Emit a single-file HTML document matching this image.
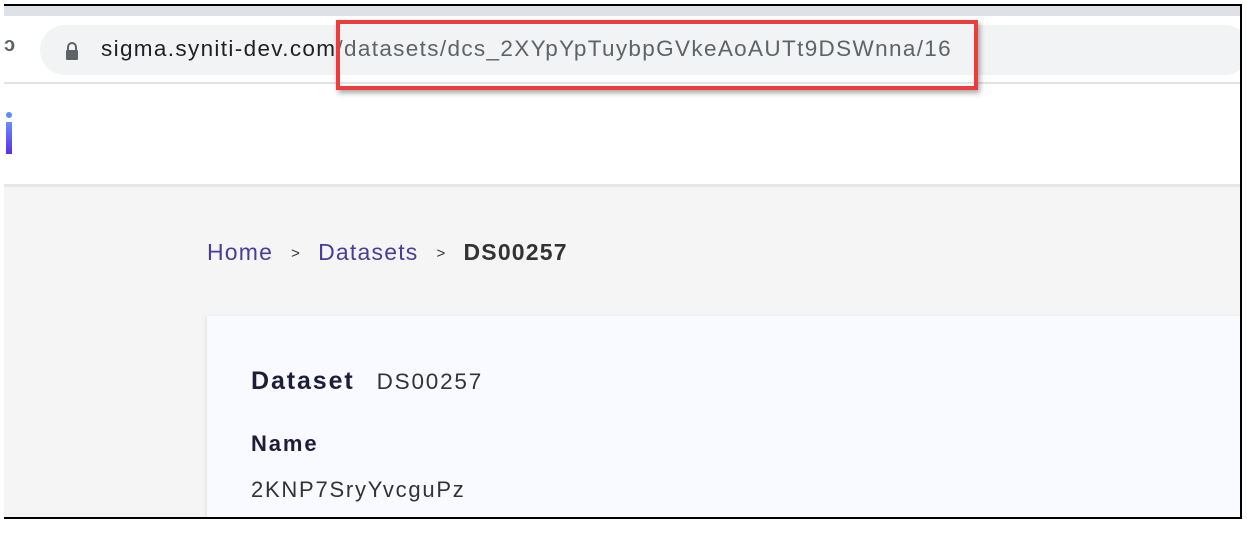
<!DOCTYPE html>
<html><head><style>
*{margin:0;padding:0;box-sizing:border-box}
body{width:1247px;height:533px;background:#fff;position:relative;overflow:hidden;font-family:"Liberation Sans",sans-serif}
.abs{position:absolute}
</style></head><body>
<div class="abs" style="left:4px;top:4px;width:1238px;height:515px;border:2px solid #000;border-left:none;overflow:hidden;background:#fff">
  <div class="abs" style="left:0;top:0;width:1236px;height:10px;background:#dee1e6"></div>
  <div class="abs" style="left:0;top:10px;width:1236px;height:66px;background:#fff"></div>
  <div class="abs" style="left:36px;top:19px;width:1210px;height:50px;border-radius:25px;background:#f1f3f4"></div>
  <div class="abs" style="left:0;top:76px;width:1236px;height:2px;background:#e3e3e3"></div>
  <div class="abs" style="left:0;top:28px;width:6px;height:28px;color:#5f6368;font-size:20px;font-weight:bold">ↄ</div>
  <svg class="abs" style="left:60px;top:35px" width="16" height="20" viewBox="0 0 16 20"><path d="M4 9V6a4 4 0 0 1 8 0v3" fill="none" stroke="#5f6368" stroke-width="2"/><rect x="2" y="9" width="12" height="10" rx="1" fill="#5f6368"/></svg>
  <div class="abs" style="left:97px;top:30px;font-size:22.5px;color:#202124;white-space:nowrap;letter-spacing:1.35px">sigma.syniti-dev.com<span style="color:#5f6368">/datasets/dcs_2XYpYpTuybpGVkeAoAUTt9DSWnna/16</span></div>
  <div class="abs" style="left:2px;top:106px;width:6px;height:6px;border-radius:3px;background:#5b8cff"></div>
  <div class="abs" style="left:2px;top:116px;width:6px;height:32px;background:linear-gradient(#6a8cff,#5a2ee8)"></div>
  <div class="abs" style="left:0;top:178px;width:1236px;height:3px;background:#e6e6e6"></div>
  <div class="abs" style="left:0;top:181px;width:1236px;height:340px;background:#f5f5f5"></div>
  <div class="abs" style="left:203px;top:233px;font-size:23px;color:#333;white-space:nowrap;letter-spacing:1.2px"><span style="color:#4b3c9c">Home</span><span style="font-size:15px;margin:0 17px 0 18px;position:relative;top:-2px">&gt;</span><span style="color:#4b3c9c">Datasets</span><span style="font-size:15px;margin:0 17px 0 18px;position:relative;top:-2px">&gt;</span><b>DS00257</b></div>
  <div class="abs" style="left:203px;top:310px;width:1040px;height:220px;background:#f8faff;box-shadow:-2px 0 4px rgba(0,0,0,0.06)"></div>
  <div class="abs" style="left:247px;top:361px;font-size:25px;color:#1d1d3a;white-space:nowrap;letter-spacing:1.9px"><b>Dataset</b><span style="font-size:22.5px;color:#333;margin-left:22px;letter-spacing:1.8px">DS00257</span></div>
  <div class="abs" style="left:247px;top:425px;font-size:22px;color:#1d1d3a;font-weight:bold;letter-spacing:1.9px">Name</div>
  <div class="abs" style="left:247px;top:471px;font-size:22px;color:#333;letter-spacing:1.75px">2KNP7SryYvcguPz</div>
  <div class="abs" style="left:332px;top:14px;width:642px;height:70px;border:4px solid #ee3b3b;box-shadow:2px 3px 5px rgba(0,0,0,0.35)"></div>
</div>
</body></html>
